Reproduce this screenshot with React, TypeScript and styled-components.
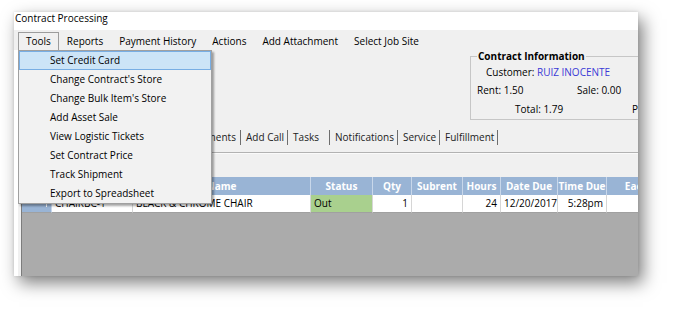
import React from "react";
import styled, { createGlobalStyle } from "styled-components";

const GlobalStyle = createGlobalStyle`
  html, body { margin: 0; padding: 0; background: #ffffff; }
  body {
    font-family: "Open Sans", "Noto Sans", "Liberation Sans", sans-serif;
    font-size: 10px;
    color: #000000;
  }
  #root { width: 673px; height: 311px; overflow: hidden; }
`;

const Page = styled.div`
  width: 673px;
  height: 311px;
  padding: 12px 0 0 14px;
  box-sizing: border-box;
  background: #ffffff;
`;

const Window = styled.div`
  width: 624px;
  height: 264px;
  background: #ffffff;
  box-shadow: 5px 7px 16px rgba(0, 0, 0, 0.5), 0 0 3px rgba(0, 0, 0, 0.12);
  display: flex;
  flex-direction: column;
  overflow: hidden;
`;

const TitleBar = styled.div`
  height: 18px;
  flex: none;
  line-height: 13px;
  padding-left: 1px;
  background: #ffffff;
  white-space: nowrap;
`;

const MenuBar = styled.div`
  height: 20px;
  flex: none;
  display: flex;
  align-items: flex-start;
  padding-left: 4px;
  background: #f0f0f0;
  position: relative;
  z-index: 5;
`;

const MenuItem = styled.div<{ $open?: boolean }>`
  position: relative;
  margin-top: 2px;
  height: 18px;
  box-sizing: border-box;
  padding: 0 7px;
  line-height: 17px;
  border: 1px solid ${(p) => (p.$open ? "#9c9c9c" : "transparent")};
  border-bottom: none;
  white-space: nowrap;
`;

const Dropdown = styled.div`
  position: absolute;
  left: -1px;
  top: 100%;
  width: 194px;
  box-sizing: border-box;
  border: 1px solid #a0a0a0;
  background: #f2f2f2;
  box-shadow: 2px 2px 2px rgba(0, 0, 0, 0.35);
  z-index: 10;
`;

const DropItem = styled.div<{ $active?: boolean }>`
  height: 19px;
  box-sizing: border-box;
  line-height: 17px;
  padding-left: 30px;
  border: 1px solid ${(p) => (p.$active ? "#78aee4" : "transparent")};
  background: ${(p) => (p.$active ? "#cce4f7" : "transparent")};
  white-space: nowrap;
`;

const Body = styled.div`
  flex: 1;
  margin-left: 4px;
  background: #f0f0f0;
  display: flex;
  flex-direction: column;
  min-height: 0;
`;

const TopArea = styled.div`
  height: 76px;
  flex: none;
  display: grid;
  grid-template-columns: 452px 240px;
  align-items: start;
  overflow: hidden;
`;

const GroupBox = styled.fieldset`
  margin: 0;
  padding: 0 0 3px 6px;
  border: 1px solid #c6c6c6;
  min-width: 0;
`;

const GroupTitle = styled.legend`
  font-weight: bold;
  padding: 0 1px;
  line-height: 13px;
`;

const InfoRow = styled.div<{ $indent: number; $top: number }>`
  display: flex;
  line-height: 13px;
  padding-left: ${(p) => p.$indent}px;
  margin-top: ${(p) => p.$top}px;
  white-space: nowrap;
`;

const InfoCell = styled.span<{ $w?: number }>`
  display: inline-block;
  width: ${(p) => (p.$w ? `${p.$w}px` : "auto")};
  flex: none;
`;

const Link = styled.span`
  color: #3a3ad6;
`;

const TabStrip = styled.div`
  height: 26px;
  flex: none;
  box-sizing: border-box;
  padding-top: 4px;
  display: flex;
  align-items: flex-start;
  overflow: hidden;
`;

const Tab = styled.div<{ $w: number }>`
  min-width: ${(p) => p.$w}px;
  flex: none;
  height: 15px;
  line-height: 15px;
  box-sizing: border-box;
  padding: 0 3px 0 5px;
  border-right: 1px solid #6e6e6e;
  color: #222222;
  white-space: nowrap;
`;

const Divider = styled.div`
  flex: none;
  border-top: 1px solid #b2b2b2;
  border-bottom: 1px solid #fafafa;
`;

const Band = styled.div`
  height: 23px;
  flex: none;
  background: #f0f0f0;
`;

const Grid = styled.div`
  flex: 1;
  margin-left: 3px;
  border-left: 1px solid #7c7c7c;
  background: #ababab;
  overflow: hidden;
`;

const GridRow = styled.div`
  display: grid;
  grid-template-columns: 30px 81px 178px 62px 39px 51px 38px 57px 49px 60px;
  width: max-content;
`;

const HeaderCell = styled.div`
  height: 18px;
  line-height: 18px;
  box-sizing: border-box;
  background: #99b4d5;
  color: #ffffff;
  font-weight: bold;
  text-align: center;
  border-right: 1px solid #c8d7ea;
  white-space: nowrap;
  overflow: hidden;
`;

const DataCell = styled.div<{ $align?: "left" | "right"; $bg?: string }>`
  height: 18px;
  line-height: 17px;
  box-sizing: border-box;
  padding: 0 3px;
  background: ${(p) => p.$bg ?? "#ffffff"};
  text-align: ${(p) => p.$align ?? "left"};
  border-right: 1px solid #d6d6d6;
  border-bottom: 1px solid #a0a0a0;
  white-space: nowrap;
  overflow: hidden;
`;

const RowHead = styled.div`
  height: 18px;
  box-sizing: border-box;
  background: #99b4d5;
  border-right: 1px solid #c8d7ea;
  border-bottom: 1px solid #a0a0a0;
  display: flex;
  justify-content: flex-end;
  align-items: center;
  padding-right: 4px;
`;

const Indicator = styled.span`
  width: 1px;
  height: 7px;
  background: #ffffff;
`;

const menuItems = [
  "Set Credit Card",
  "Change Contract's Store",
  "Change Bulk Item's Store",
  "Add Asset Sale",
  "View Logistic Tickets",
  "Set Contract Price",
  "Track Shipment",
  "Export to Spreadsheet",
];

const topMenus = ["Reports", "Payment History", "Actions", "Add Attachment", "Select Job Site"];

const tabs: { label: string; w: number }[] = [
  { label: "Items", w: 50 },
  { label: "Charges", w: 52 },
  { label: "Payments", w: 60 },
  { label: "Comments", w: 61 },
  { label: "Add Call", w: 47 },
  { label: "Tasks", w: 42 },
  { label: "Notifications", w: 66 },
  { label: "Service", w: 41 },
  { label: "Fulfillment", w: 57 },
];

const headers = ["Name", "Status", "Qty", "Subrent", "Hours", "Date Due", "Time Due", "Each"];

export default function App() {
  return (
    <Page>
      <GlobalStyle />
      <Window>
        <TitleBar>Contract Processing</TitleBar>
        <MenuBar>
          <MenuItem $open>
            Tools
            <Dropdown>
              {menuItems.map((m, i) => (
                <DropItem key={m} $active={i === 0}>
                  {m}
                </DropItem>
              ))}
            </Dropdown>
          </MenuItem>
          {topMenus.map((m) => (
            <MenuItem key={m}>{m}</MenuItem>
          ))}
        </MenuBar>
        <Body>
          <TopArea>
            <div />
            <GroupBox>
              <GroupTitle>Contract Information</GroupTitle>
              <InfoRow $indent={9} $top={3}>
                <InfoCell>
                  Customer: <Link>RUIZ INOCENTE</Link>
                </InfoCell>
              </InfoRow>
              <InfoRow $indent={0} $top={5}>
                <InfoCell $w={100}>Rent: 1.50</InfoCell>
                <InfoCell>Sale: 0.00</InfoCell>
              </InfoRow>
              <InfoRow $indent={38} $top={6}>
                <InfoCell $w={117}>Total: 1.79</InfoCell>
                <InfoCell>Paid: 0.00</InfoCell>
              </InfoRow>
            </GroupBox>
          </TopArea>
          <TabStrip>
            {tabs.map((t) => (
              <Tab key={t.label} $w={t.w}>
                {t.label}
              </Tab>
            ))}
          </TabStrip>
          <Divider />
          <Band />
          <Grid>
            <GridRow>
              <HeaderCell />
              <HeaderCell>Item</HeaderCell>
              {headers.map((h) => (
                <HeaderCell key={h}>{h}</HeaderCell>
              ))}
            </GridRow>
            <GridRow>
              <RowHead>
                <Indicator />
              </RowHead>
              <DataCell>CHAIRBC-1</DataCell>
              <DataCell>BLACK &amp; CHROME CHAIR</DataCell>
              <DataCell $bg="#a9d08e">Out</DataCell>
              <DataCell $align="right">1</DataCell>
              <DataCell />
              <DataCell $align="right">24</DataCell>
              <DataCell $align="right">12/20/2017</DataCell>
              <DataCell $align="right">5:28pm</DataCell>
              <DataCell />
            </GridRow>
          </Grid>
        </Body>
      </Window>
    </Page>
  );
}
